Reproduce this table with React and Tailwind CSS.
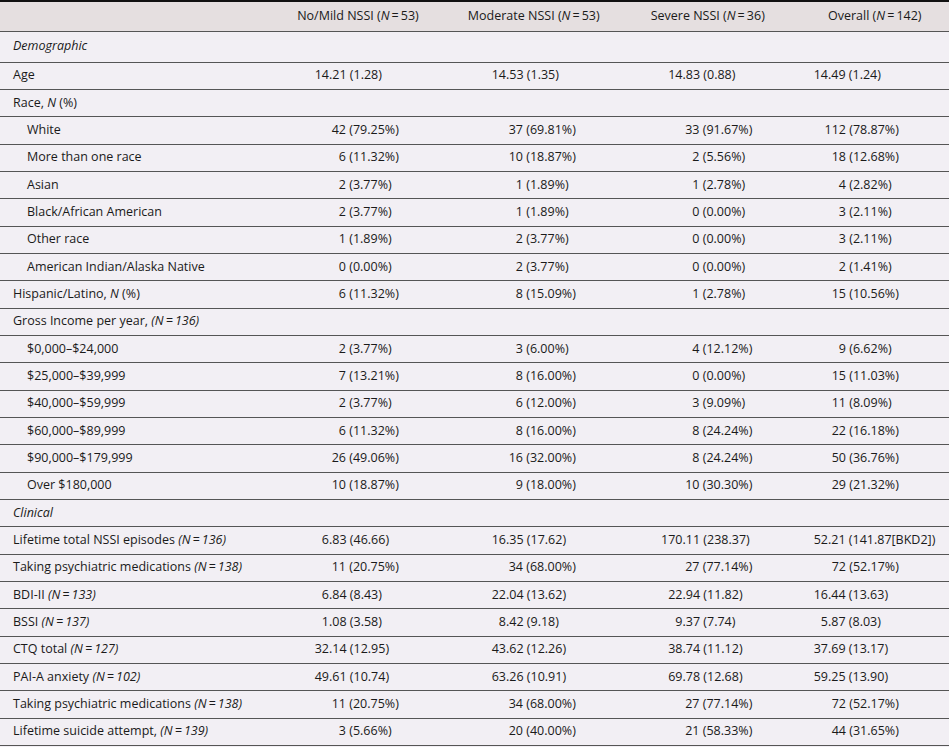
const T = "\u2009";

const cols = [
  { head: "No/Mild NSSI", n: "53", mean: "w-[59px]", pct: "w-[76px]", hp: "" },
  { head: "Moderate NSSI", n: "53", mean: "w-[60px]", pct: "w-[77px]", hp: "" },
  { head: "Severe NSSI", n: "36", mean: "w-[61px]", pct: "w-[78px]", hp: "pl-[2px]" },
  { head: "Overall", n: "142", mean: "w-[36px]", pct: "w-[54px]", hp: "pl-[8px]" },
];

const N = (n) => (
  <i>
    (N{T}={T}
    {n})
  </i>
);

const rows = [
  { section: "Demographic", first: true },
  { label: "Age", vals: ["14.21 (1.28)", "14.53 (1.35)", "14.83 (0.88)", "14.49 (1.24)"] },
  { label: <>Race, <i>N</i> (%)</> },
  { label: "White", indent: true, vals: ["42 (79.25%)", "37 (69.81%)", "33 (91.67%)", "112 (78.87%)"] },
  { label: "More than one race", indent: true, vals: ["6 (11.32%)", "10 (18.87%)", "2 (5.56%)", "18 (12.68%)"] },
  { label: "Asian", indent: true, vals: ["2 (3.77%)", "1 (1.89%)", "1 (2.78%)", "4 (2.82%)"] },
  { label: "Black/African American", indent: true, vals: ["2 (3.77%)", "1 (1.89%)", "0 (0.00%)", "3 (2.11%)"] },
  { label: "Other race", indent: true, vals: ["1 (1.89%)", "2 (3.77%)", "0 (0.00%)", "3 (2.11%)"] },
  { label: "American Indian/Alaska Native", indent: true, vals: ["0 (0.00%)", "2 (3.77%)", "0 (0.00%)", "2 (1.41%)"] },
  { label: <>Hispanic/Latino, <i>N</i> (%)</>, vals: ["6 (11.32%)", "8 (15.09%)", "1 (2.78%)", "15 (10.56%)"] },
  { label: <>Gross Income per year, {N("136")}</> },
  { label: "$0,000–$24,000", indent: true, vals: ["2 (3.77%)", "3 (6.00%)", "4 (12.12%)", "9 (6.62%)"] },
  { label: "$25,000–$39,999", indent: true, vals: ["7 (13.21%)", "8 (16.00%)", "0 (0.00%)", "15 (11.03%)"] },
  { label: "$40,000–$59,999", indent: true, vals: ["2 (3.77%)", "6 (12.00%)", "3 (9.09%)", "11 (8.09%)"] },
  { label: "$60,000–$89,999", indent: true, vals: ["6 (11.32%)", "8 (16.00%)", "8 (24.24%)", "22 (16.18%)"] },
  { label: "$90,000–$179,999", indent: true, vals: ["26 (49.06%)", "16 (32.00%)", "8 (24.24%)", "50 (36.76%)"] },
  { label: "Over $180,000", indent: true, vals: ["10 (18.87%)", "9 (18.00%)", "10 (30.30%)", "29 (21.32%)"] },
  { section: "Clinical" },
  { label: <>Lifetime total NSSI episodes {N("136")}</>, vals: ["6.83 (46.66)", "16.35 (17.62)", "170.11 (238.37)", "52.21 (141.87[BKD2])"] },
  { label: <>Taking psychiatric medications {N("138")}</>, vals: ["11 (20.75%)", "34 (68.00%)", "27 (77.14%)", "72 (52.17%)"] },
  { label: <>BDI-II {N("133")}</>, vals: ["6.84 (8.43)", "22.04 (13.62)", "22.94 (11.82)", "16.44 (13.63)"] },
  { label: <>BSSI {N("137")}</>, vals: ["1.08 (3.58)", "8.42 (9.18)", "9.37 (7.74)", "5.87 (8.03)"] },
  { label: <>CTQ total {N("127")}</>, vals: ["32.14 (12.95)", "43.62 (12.26)", "38.74 (11.12)", "37.69 (13.17)"] },
  { label: <>PAI-A anxiety {N("102")}</>, vals: ["49.61 (10.74)", "63.26 (10.91)", "69.78 (12.68)", "59.25 (13.90)"] },
  { label: <>Taking psychiatric medications {N("138")}</>, vals: ["11 (20.75%)", "34 (68.00%)", "27 (77.14%)", "72 (52.17%)"] },
  { label: <>Lifetime suicide attempt, {N("139")}</>, vals: ["3 (5.66%)", "20 (40.00%)", "21 (58.33%)", "44 (31.65%)"] },
];

const grid = "grid grid-cols-[270px_176px_175.5px_170.5px_157.5px]";

// values line up on the decimal point (means) or on the bracket (counts)
const Value = ({ v, col }) => {
  const isPct = v.includes("%");
  const cut = isPct ? v.indexOf(" ") : v.indexOf(".");
  return (
    <div className="flex items-center whitespace-nowrap">
      <span className={`${isPct ? col.pct : col.mean} shrink-0 text-right`}>{v.slice(0, cut)}</span>
      <span className="whitespace-pre">{v.slice(cut)}</span>
    </div>
  );
};

export default function App() {
  return (
    <div
      className="w-[949px] h-[747px] bg-[#f2eff4] text-[#1a1a1a] text-[12.5px] overflow-hidden"
      style={{ fontFamily: '"Open Sans", "Noto Sans", sans-serif' }}
    >
      <div className={`${grid} h-[32px] bg-[#e5dfe0] border-t-2 border-b border-t-[#111] border-b-[#555] items-center`}>
        <div />
        {cols.map((c) => (
          <div key={c.head} className={`${c.hp} text-center whitespace-nowrap`}>
            {c.head} ({<i>N</i>}
            {T}={T}
            {c.n})
          </div>
        ))}
      </div>
      {rows.map((r, i) => (
        <div
          key={i}
          className={`${grid} ${r.first ? "h-[30.67px]" : "h-[27.33px]"} border-b border-[#555] items-center`}
        >
          {r.section ? (
            <div className="pl-[13px] italic col-span-5">{r.section}</div>
          ) : (
            <>
              <div className={`${r.indent ? "pl-[27px]" : "pl-[13px]"} whitespace-nowrap`}>{r.label}</div>
              {cols.map((c, j) => (
                <div key={j}>{r.vals ? <Value v={r.vals[j]} col={c} /> : null}</div>
              ))}
            </>
          )}
        </div>
      ))}
    </div>
  );
}
